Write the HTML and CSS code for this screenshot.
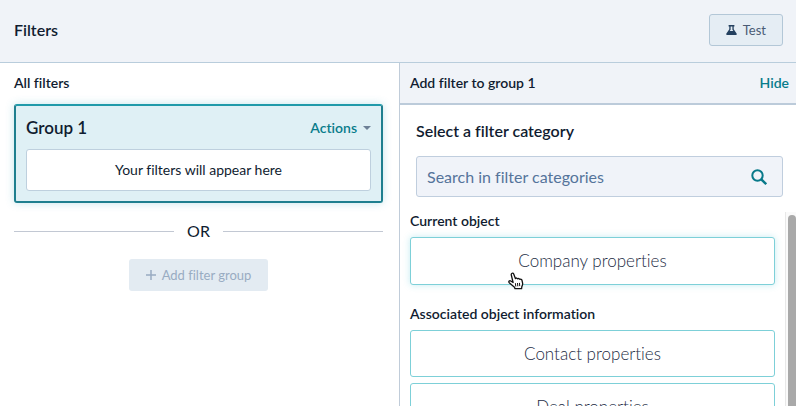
FILE: index.html
```html
<!DOCTYPE html>
<html lang="en">
<head>
<meta charset="utf-8">
<meta name="viewport" content="width=device-width, initial-scale=1">
<title>Filters</title>
<link rel="stylesheet" href="styles.css">
</head>
<body>
<header class="topbar">
  <h1 class="topbar-title">Filters</h1>
  <button class="btn-test" type="button">
    <svg class="icon-flask" viewBox="0 0 11 10" aria-hidden="true"><path fill="currentColor" fill-rule="evenodd" d="M2.6 0h5.8v1.4h-.7v2.9L10.6 8.4c.5.8.2 1.6-.8 1.6H1.2c-1 0-1.3-.8-.8-1.6l2.9-4.1V1.4h-.7zM4.6 1.4v3.3L3.7 6h3.6l-.9-1.3V1.4z"/></svg>
    Test
  </button>
</header>
<main class="columns">
  <section class="groups">
    <h2 class="label">All filters</h2>
    <article class="group">
      <div class="group-head">
        <h3 class="group-title">Group 1</h3>
        <button class="link-btn actions" type="button">Actions<span class="caret"></span></button>
      </div>
      <p class="group-empty">Your filters will appear here</p>
    </article>
    <div class="divider">OR</div>
    <button class="btn-add" type="button" disabled>
      <svg class="icon-plus" viewBox="0 0 10 10" aria-hidden="true"><path d="M5 0v10M0 5h10" stroke="currentColor" stroke-width="1.5"/></svg>
      Add filter group
    </button>
  </section>
  <section class="panel">
    <div class="panel-head">
      <h2 class="label">Add filter to group 1</h2>
      <button class="link-btn" type="button">Hide</button>
    </div>
    <div class="search-area">
      <label class="search-label" for="search">Select a filter category</label>
      <div class="search-box">
        <input class="search-input" id="search" type="text" placeholder="Search in filter categories">
        <svg class="icon-search" viewBox="0 0 16 16" aria-hidden="true"><g fill="none" stroke="currentColor" stroke-width="2"><circle cx="6.5" cy="6.5" r="5.2"/><path stroke-width="2.4" d="M10.3 10.3L15.2 15.2"/></g></svg>
      </div>
    </div>
    <div class="scroller">
      <div class="list">
        <h3 class="list-label">Current object</h3>
        <button class="option option-hover" type="button">Company properties
          <svg class="pointer" viewBox="0 0 16 18" aria-hidden="true"><path fill="#fff" stroke="#111" stroke-width="1.3" stroke-linejoin="round" d="M5.1 10.5L3.3 3C2.9 1.3 5 .4 5.7 2l1.7 4.6c.6-.9 1.9-.7 2.2.3.7-.7 1.9-.4 2.2.5.9-.5 2 0 2.2 1l.6 2.7c.3 1.6-.4 2.6-.8 3.6l-.2 2H7l-.5-1.5L1.2 10.7C.2 9.4 1.6 8.3 2.8 9z"/><path stroke="#111" d="M7.4 11.2l.4 3.3M9.5 11l.3 3.3M11.5 10.9l.2 3.2"/></svg>
        </button>
        <h3 class="list-label">Associated object information</h3>
        <button class="option" type="button">Contact properties</button>
        <button class="option" type="button">Deal properties</button>
      </div>
      <div class="track"><div class="thumb"></div></div>
    </div>
  </section>
</main>
</body>
</html>
```
FILE: styles.css
```css
* { box-sizing: border-box; }

body {
  margin: 0;
  height: 100vh;
  overflow: hidden;
  display: flex;
  flex-direction: column;
  font-family: Lato, "Open Sans", sans-serif;
  font-size: 14px;
  font-variant-ligatures: none;
  line-height: 20px;
  color: #101c30;
  background: #fff;
}

h1, h2, h3, p { margin: 0; }

button, input {
  font: inherit;
  font-variant-ligatures: none;
  color: inherit;
}

.topbar {
  display: flex;
  flex: none;
  align-items: center;
  justify-content: space-between;
  padding: 14px 13px 16px 14px;
  background: #f0f3f8;
  border-bottom: 1px solid #b9cddc;
}

.topbar-title {
  font-size: 16px;
  font-weight: 600;
}

.btn-test {
  display: flex;
  align-items: center;
  gap: 6px;
  height: 32px;
  padding: 0 16px;
  font-size: 13px;
  color: #4a5b75;
  background: #e5edf4;
  border: 1px solid #b3c7d7;
  border-radius: 3px;
}

.icon-flask {
  width: 11px;
  height: 10px;
  color: #24405f;
}

.columns {
  flex: 1;
  min-height: 0;
  display: grid;
  grid-template-columns: 399fr 397fr;
}

.label,
.list-label {
  font-size: 14px;
  font-weight: 600;
}

.list-label {
  line-height: 18px;
}

.groups {
  padding: 10px 16px 0 14px;
}

.group {
  margin-top: 11px;
  padding: 12px 10px 10px;
  background: #dff0f5;
  border: 2px solid #1f7f8f;
  border-top-color: #209aaa;
  border-radius: 3px;
  box-shadow: 0 0 9px rgba(60, 170, 190, .3);
}

.group-head {
  display: flex;
  align-items: center;
  justify-content: space-between;
}

.group-title {
  font-size: 17px;
  font-weight: 600;
}

.link-btn {
  padding: 0;
  font-weight: 600;
  color: #087c8b;
  background: none;
  border: 0;
}

.actions {
  display: flex;
  align-items: center;
  gap: 6px;
}

.caret {
  border: 4px solid transparent;
  border-top-color: #6d8096;
  border-bottom: 0;
}

.group-empty {
  margin-top: 11px;
  padding: 10px;
  text-align: center;
  background: #fff;
  border: 1px solid #bed0de;
  border-radius: 3px;
}

.divider {
  display: flex;
  align-items: center;
  gap: 13px;
  margin-top: 18px;
  font-size: 16px;
}

.divider::before,
.divider::after {
  content: "";
  flex: 1;
  height: 1px;
  background: #c2c8d3;
}

.btn-add {
  display: flex;
  align-items: center;
  gap: 6px;
  height: 32px;
  margin: 18px auto 0;
  padding: 0 17px;
  font-size: 13px;
  color: #99acc2;
  background: #e3ebf2;
  border: 0;
  border-radius: 3px;
}

.icon-plus {
  width: 10px;
  height: 10px;
}

.panel {
  display: flex;
  flex-direction: column;
  min-height: 0;
  border-left: 1px solid #c0ccd9;
}

.panel-head {
  display: flex;
  flex: none;
  justify-content: space-between;
  padding: 10px 7px 10px 10px;
  background: #f0f3f8;
  border-bottom: 2px solid #bccbda;
}

.search-area {
  flex: none;
  padding: 16px 13px 0 16px;
}

.search-label {
  display: block;
  font-size: 16px;
  font-weight: 600;
}

.search-box {
  display: flex;
  align-items: center;
  height: 41px;
  margin-top: 15px;
  padding: 0 15px 0 10px;
  background: #f0f3f9;
  border: 1px solid #c0cede;
  border-radius: 3px;
}

.search-input {
  flex: 1;
  min-width: 0;
  padding: 0;
  font-size: 16px;
  background: none;
  border: 0;
  outline: 0;
}

.search-input::placeholder {
  color: #55749b;
  opacity: 1;
}

.icon-search {
  width: 16px;
  height: 16px;
  color: #08798a;
}

.scroller {
  flex: 1;
  min-height: 0;
  display: flex;
  margin-top: 15px;
}

.list {
  flex: 1;
  overflow: hidden;
  padding: 0 10px;
}

.option {
  position: relative;
  display: block;
  width: 100%;
  height: 47px;
  margin: 7px 0 6px;
  font-size: 17px;
  font-weight: 300;
  color: #1c2c44;
  background: #fff;
  border: 1px solid #7dd0d8;
  border-radius: 3px;
}

.option + .option {
  margin-top: 6px;
}

.option-hover {
  height: 48px;
  margin-bottom: 20px;
  box-shadow: 0 0 7px rgba(60, 190, 210, .3);
}

.pointer {
  position: absolute;
  top: 34px;
  left: 97px;
  width: 16px;
  height: 18px;
}

.track {
  width: 11px;
  padding: 3px 0 0 2px;
  background: #fafafa;
  border-left: 1px solid #e8e8e8;
}

.thumb {
  height: 100%;
  background: #a9a9a9;
  border-radius: 4px 4px 0 0;
}
```
